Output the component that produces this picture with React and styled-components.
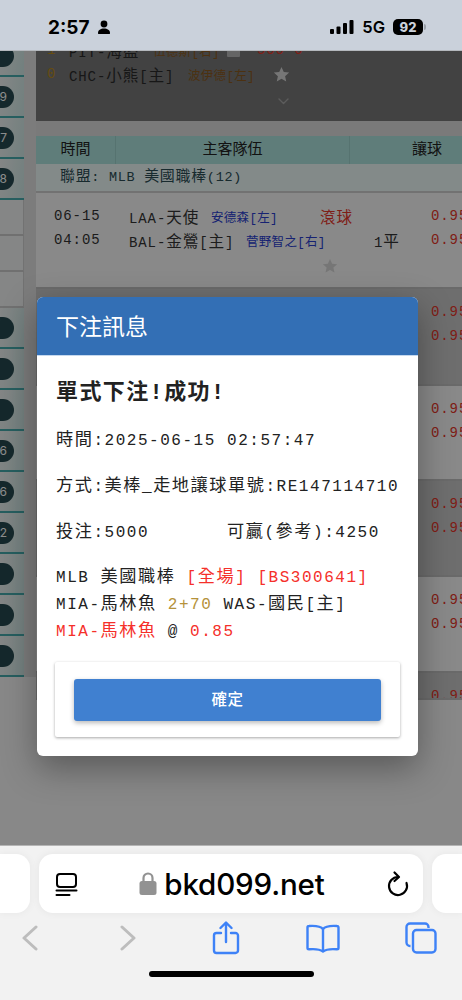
import React from 'react'
import styled, { createGlobalStyle } from 'styled-components'

const MONO = `"Liberation Mono", "Noto Sans CJK TC", monospace`
const SANS = `Inter, "Noto Sans CJK TC", sans-serif`

const GlobalStyle = createGlobalStyle`
  html, body { margin: 0; padding: 0; background: #f2f2f2; }
  * { box-sizing: border-box; }
`

const Screen = styled.div`
  width: 462px;
  height: 1000px;
  display: flex;
  flex-direction: column;
  overflow: hidden;
  font-family: ${MONO};
`

/* status bar */
const StatusBar = styled.div`
  height: 50px;
  flex: none;
  background: #cad1db;
  display: flex;
  align-items: center;
  justify-content: space-between;
  padding: 4px 39px 0 48px;
  color: #000;
  font-family: ${SANS};
  position: relative;
  z-index: 3;
  box-shadow: 0 1px 0 #b4b8bd;
`
const StatusGroup = styled.div`
  display: flex;
  align-items: center;
  gap: ${({ gap }) => gap || 4}px;
`
const Clock = styled.span`
  font-size: 19px;
  font-weight: 700;
`
const Network = styled.span`
  font-size: 16.5px;
  font-weight: 600;
`
const Battery = styled.span`
  width: 30px;
  height: 16px;
  border-radius: 5px;
  background: #000;
  color: #cad1db;
  font-size: 13px;
  font-weight: 800;
  line-height: 16px;
  text-align: center;
  position: relative;
  &::after {
    content: '';
    position: absolute;
    right: -3px;
    top: 5px;
    width: 2px;
    height: 6px;
    border-radius: 0 2px 2px 0;
    background: #9aa0a8;
  }
`

/* page behind the dialog */
const Page = styled.div`
  flex: 1;
  position: relative;
  overflow: hidden;
  display: flex;
  align-items: flex-start;
  background: #f7f7f7;
`
const Sidebar = styled.div`
  width: 36px;
  flex: none;
  margin-top: -14px;
  padding-right: 12px;
  background: #e2e2e2;
  display: flex;
  flex-direction: column;
`
const SideRow = styled.div`
  height: 41px;
  display: flex;
  align-items: center;
  background: linear-gradient(100deg, #f1f4f4 0%, #cfe9e6 100%);
  border-bottom: 2px solid #46acae;
`
const SideBlank = styled.div`
  height: 36px;
  background: #f3f5f5;
  border-right: 1px solid #d0d0d0;
  border-bottom: 2px solid #cccccc;
`
const Pill = styled.span`
  width: 28px;
  height: 22px;
  margin-left: -14px;
  border-radius: 11px;
  background: #274a50;
  color: #fff;
  font: 12px ${SANS};
  line-height: 22px;
  text-align: right;
  padding-right: 7px;
  flex: none;
`
const Main = styled.div`
  flex: 1;
  min-width: 0;
  display: flex;
  flex-direction: column;
  overflow: hidden;
`
const Games = styled.div`
  font-size: 14px;
  display: flex;
  flex-direction: column;
`
const GameCard = styled.div`
  height: ${({ height }) => height}px;
  flex: none;
  padding: 11px 0 0 18px;
  background: ${({ tone }) => (tone === 'dark' ? '#c9c9c9' : '#f9f9f9')};
  border-bottom: 2px solid #c2c2c2;
  overflow: hidden;
`
const TopCard = styled.div`
  height: 83px;
  flex: none;
  margin-top: -12px;
  background: #787878;
  padding-left: 11px;
  font-size: 14px;
`
const Spacer = styled.div`
  height: 15px;
  background: #dedede;
`
const GameRow = styled.div`
  display: grid;
  grid-template-columns: ${({ cols }) => cols};
  height: 24px;
  align-items: center;
  white-space: nowrap;
  letter-spacing: 0.9px;
  color: ${({ dim }) => (dim ? '#2a2a2a' : '#333')};
`
const Pitcher = styled.span`
  color: ${({ color }) => color};
  font-size: 12.5px;
  letter-spacing: 0.3px;
`
const Goal = styled.span`
  color: #b98a1e;
`
const Live = styled.span`
  color: #e8362a;
  font-size: 15.5px;
`
const Odds = styled.span`
  color: #e8362a;
`
const MutedBox = styled.span`
  display: block;
  width: 13px;
  height: 13px;
  border-radius: 1px;
  background: #b8b8b8;
`
const CardFoot = styled.div`
  display: flex;
  justify-content: center;
  width: 32px;
  margin: ${({ top }) => top}px 0 0 ${({ left }) => left}px;
`
const HeaderRow = styled.div`
  height: 28px;
  flex: none;
  display: grid;
  grid-template-columns: 80px 234px 154px;
  background: #aee4de;
  color: #222;
  font: 15px "Noto Sans CJK TC", sans-serif;
  line-height: 24px;
  text-align: center;
`
const HeaderCell = styled.div`
  border-right: 1px solid #9dd2cc;
`
const League = styled.div`
  height: 29px;
  flex: none;
  padding-left: 24px;
  line-height: 27px;
  font-size: 13.5px;
  letter-spacing: 0.7px;
  color: #2c4d55;
  background: #eefbfa;
  border-bottom: 2px solid #d0d0d0;
`
const Scrim = styled.div`
  position: absolute;
  inset: 0;
  background: rgba(0, 0, 0, 0.45);
  padding: 247px 44px 0 37px;
`

/* dialog */
const Dialog = styled.div`
  height: 459px;
  background: #fff;
  border-radius: 6px;
  overflow: hidden;
  box-shadow: 0 12px 34px rgba(0, 0, 0, 0.35);
  display: flex;
  flex-direction: column;
`
const DialogHeader = styled.div`
  height: 59px;
  flex: none;
  padding-left: 19px;
  background: #336fb5;
  border-bottom: 1px solid #c5d8ee;
  color: #fff;
  font: 23px/56px "Noto Sans CJK TC", sans-serif;
`
const DialogBody = styled.div`
  flex: 1;
  padding: 20px 0 0 19px;
  color: #222;
  font-size: 16px;
  letter-spacing: 1.53px;
  white-space: pre;
`
const Title = styled.div`
  height: 36px;
  margin-bottom: 17px;
  font: 700 22px/36px ${MONO};
  letter-spacing: 1.4px;
`
const Line = styled.div`
  height: 46px;
  line-height: 24px;
`
const Summary = styled.div`
  margin-top: -3px;
`
const SummaryLine = styled.div`
  height: 27px;
  line-height: 27px;
`
const Accent = styled.span`
  color: ${({ color }) => color};
`
const ButtonCard = styled.div`
  height: 75px;
  width: 345px;
  margin: 17px 0 0 -1px;
  padding: 17px 18px 0 19px;
  background: #fff;
  border-radius: 2px;
  box-shadow: 0 1px 3px rgba(0, 0, 0, 0.35);
`
const ConfirmButton = styled.button`
  display: block;
  width: 307px;
  height: 42px;
  padding: 0 0 4px;
  border: 0;
  border-radius: 3px;
  background: #4080d0;
  color: #fff;
  font: 500 15.5px "Noto Sans CJK TC", sans-serif;
  letter-spacing: 0.5px;
  box-shadow: 0 2px 5px rgba(0, 0, 0, 0.28);
`
// the original's Chinese glyphs run larger than its Latin ones
const Han = styled.span`
  font-size: ${({ scale }) => scale}em;
`

/* browser chrome */
const Browser = styled.div`
  height: 155px;
  flex: none;
  background: #f2f2f2;
  border-top: 1px solid #b5b5b5;
  display: flex;
  flex-direction: column;
  position: relative;
  z-index: 3;
`
const TabStrip = styled.div`
  height: 59px;
  margin-top: 8px;
  flex: none;
  display: grid;
  grid-template-columns: 30px 384px 30px;
  column-gap: 9px;
`
const TabPeek = styled.div`
  background: #fff;
  border-radius: ${({ side }) => (side === 'left' ? '0 14px 14px 0' : '14px 0 0 14px')};
  box-shadow: 0 0 8px rgba(0, 0, 0, 0.05);
`
const AddressBar = styled.div`
  background: #fff;
  border-radius: 14px;
  box-shadow: 0 0 8px rgba(0, 0, 0, 0.06);
  display: flex;
  align-items: center;
  justify-content: space-between;
  padding: 0 13px 0 15px;
`
const Host = styled.div`
  display: flex;
  align-items: center;
  gap: 7px;
  color: #000;
  font: 500 29.6px ${SANS};
  letter-spacing: -0.2px;
`
const Toolbar = styled.div`
  display: flex;
  align-items: center;
  justify-content: space-between;
  height: 44px;
  margin-top: 3px;
  padding: 0 41px 0 34px;
`
const ToolSlot = styled.div`
  width: 0;
  display: flex;
  justify-content: center;
  margin-left: ${({ shift }) => shift || 0}px;
  & > svg {
    flex: none;
  }
`
const HomeBar = styled.div`
  width: 165px;
  height: 6px;
  margin: 11px 0 0 149px;
  border-radius: 3px;
  background: #000;
`

const PersonIcon = () => (
  <svg width='14' height='15' viewBox='0 0 14 15' fill='#000'>
    <circle cx='7' cy='4' r='3.4' />
    <path d='M1 13.2c0-3 2.6-4.6 6-4.6s6 1.6 6 4.6c0 .6-.4.9-1 .9H2c-.6 0-1-.3-1-.9z' />
  </svg>
)
const SignalIcon = () => (
  <svg width='24' height='16' viewBox='0 0 24 16' fill='#000'>
    <rect x='0' y='10' width='4' height='5' rx='1' />
    <rect x='6.5' y='7.5' width='4' height='7.5' rx='1' />
    <rect x='13' y='4' width='4' height='11' rx='1' />
    <rect x='19.5' y='1' width='4' height='14' rx='1' />
  </svg>
)
const Star = ({ size = 16 }) => (
  <svg width={size} height={size} viewBox='0 0 24 24' fill='#d8d8d8'>
    <path d='M12 1.500l3.200 7 7.600.8-5.700 5.100 1.600 7.500L12 18.100l-6.700 3.800 1.600-7.500L1.200 9.300l7.600-.8z' />
  </svg>
)
const CaretIcon = () => (
  <svg width='11' height='7' viewBox='0 0 11 7' fill='none' stroke='#a8a8a8' strokeWidth='1.400' strokeLinecap='round' strokeLinejoin='round'>
    <path d='M1 1l4.500 4.500L10 1' />
  </svg>
)
const PageMenuIcon = () => (
  <svg width='24' height='28' viewBox='0 0 24 28' fill='none' stroke='#000' strokeWidth='2' strokeLinecap='round'>
    <rect x='3' y='4' width='19' height='13' rx='3' />
    <path d='M2.500 20.500h20M2.500 25h13' />
  </svg>
)
const LockIcon = () => (
  <svg width='18' height='25' viewBox='0 0 18 25' fill='#929292'>
    <path d='M4.500 11V7a4.500 4.500 0 0 1 9 0v4' fill='none' stroke='#929292' strokeWidth='2.200' />
    <rect x='0.500' y='10' width='17' height='14' rx='2.500' />
  </svg>
)
const ReloadIcon = () => (
  <svg width='24' height='28' viewBox='0 0 24 28' fill='none' stroke='#000' strokeWidth='2.200' strokeLinecap='round' strokeLinejoin='round'>
    <path d='M12 7A9 9 0 1 0 20.500 13' />
    <path d='M8.500 2.500L13 7l-4.500 4' />
  </svg>
)
const ChevronIcon = ({ flip }) => (
  <svg width='16' height='26' viewBox='0 0 16 26' fill='none' stroke='#bdbdbd' strokeWidth='3' strokeLinecap='round' strokeLinejoin='round'>
    <path d={flip ? 'M2 2l12 11L2 24' : 'M14 2L2 13l12 11'} />
  </svg>
)
const ShareIcon = () => (
  <svg width='28' height='34' viewBox='0 0 28 34' fill='none' stroke='#3e82f7' strokeWidth='2.400' strokeLinecap='round' strokeLinejoin='round'>
    <path d='M9 12H4.500a2.500 2.500 0 0 0-2.500 2.500v15A2.500 2.500 0 0 0 4.500 32h19a2.500 2.500 0 0 0 2.500-2.500v-15a2.500 2.500 0 0 0-2.500-2.500H19' />
    <path d='M14 21V2M8.500 7L14 1.500 19.500 7' />
  </svg>
)
const BookIcon = () => (
  <svg width='34' height='30' viewBox='0 0 34 30' fill='none' stroke='#3e82f7' strokeWidth='2.400' strokeLinejoin='round'>
    <path d='M17 6c-2-2.500-6-3.500-14-3-.8 0-1.500.7-1.500 1.500V25c0 .8.7 1.300 1.500 1.300 6-.5 11 0 14 2.200 3-2.200 8-2.700 14-2.200.8 0 1.500-.5 1.500-1.300V4.500c0-.8-.7-1.500-1.500-1.500-8-.5-12 .5-14 3z' />
    <path d='M17 6v22' />
  </svg>
)
const TabsIcon = () => (
  <svg width='32' height='32' viewBox='0 0 32 32' fill='none' stroke='#3e82f7' strokeWidth='2.400'>
    <path d='M5.500 24H5a3.500 3.500 0 0 1-3.500-3.500V5A3.500 3.500 0 0 1 5 1.500h15A3.500 3.500 0 0 1 23.500 5v1' />
    <rect x='8' y='8' width='22.500' height='22.500' rx='3.500' />
  </svg>
)

// splits a string so that its Chinese runs get the larger size
const Mixed = ({ text, scale = 1.075 }) =>
  text.split(/([^\x00-\x7f]+)/).map((part, i) =>
    i % 2 ? (
      <Han key={i} scale={scale}>
        {part}
      </Han>
    ) : (
      part
    )
  )

const sidebarTop = ['', '9', '7', '8']
const sidebarBottom = ['', '', '', '6', '6', '2', '', '', '']

const oddsCards = [
  { tone: 'dark', height: 97 },
  { tone: 'light', height: 95 },
  { tone: 'dark', height: 96 },
  { tone: 'light', height: 96 }
]

const ODDS_COLS = '377px auto'

const OddsRow = () => (
  <GameRow cols={ODDS_COLS}>
    <span />
    <Odds>0.95</Odds>
  </GameRow>
)

const App = () => (
  <Screen>
    <GlobalStyle />
    <StatusBar>
      <StatusGroup gap={7}>
        <Clock>2:57</Clock>
        <PersonIcon />
      </StatusGroup>
      <StatusGroup gap={8}>
        <SignalIcon />
        <Network>5G</Network>
        <Battery>92</Battery>
      </StatusGroup>
    </StatusBar>

    <Page>
      <Sidebar>
        {sidebarTop.map((n, i) => (
          <SideRow key={i}>
            <Pill>{n}</Pill>
          </SideRow>
        ))}
        <SideBlank />
        <SideBlank />
        <SideBlank />
        {sidebarBottom.map((n, i) => (
          <SideRow key={i}>
            <Pill>{n}</Pill>
          </SideRow>
        ))}
      </Sidebar>

      <Main>
        <TopCard>
          <GameRow dim cols='22px 84px 74px 30px auto'>
            <Goal>1</Goal>
            <span>
              <Mixed text='PIT-海盜' scale={1.114} />
            </span>
            <Pitcher color='#8a5a1f'>伍德斯[右]</Pitcher>
            <MutedBox />
            <Odds>500 0</Odds>
          </GameRow>
          <GameRow dim cols='22px 119px 85px auto'>
            <Goal>0</Goal>
            <span>
              <Mixed text='CHC-小熊[主]' scale={1.114} />
            </span>
            <Pitcher color='#8a5a1f'>波伊德[左]</Pitcher>
            <Star size={17} />
          </GameRow>
          <CardFoot left={220} top={12}>
            <CaretIcon />
          </CardFoot>
        </TopCard>
        <Spacer />
        <HeaderRow>
          <HeaderCell>時間</HeaderCell>
          <HeaderCell>主客隊伍</HeaderCell>
          <div>讓球</div>
        </HeaderRow>
        <League>
          <Mixed text='聯盟: MLB 美國職棒(12)' scale={1.11} />
        </League>
        <Games>
          <GameCard tone='light' height={96}>
            <GameRow cols='75px 82px 109px 111px auto'>
              <span>06-15</span>
              <span>
                <Mixed text='LAA-天使' scale={1.114} />
              </span>
              <Pitcher color='#2a3fd0'>安德森[左]</Pitcher>
              <Live>滾球</Live>
              <Odds>0.95</Odds>
            </GameRow>
            <GameRow cols='75px 117px 128px 57px auto'>
              <span>04:05</span>
              <span>
                <Mixed text='BAL-金鶯[主]' scale={1.114} />
              </span>
              <Pitcher color='#2a3fd0'>菅野智之[右]</Pitcher>
              <span>
                <Mixed text='1平' scale={1.114} />
              </span>
              <Odds>0.95</Odds>
            </GameRow>
            <CardFoot left={260} top={6}>
              <Star size={16} />
            </CardFoot>
          </GameCard>
          {oddsCards.map((card, i) => (
            <GameCard key={i} tone={card.tone} height={card.height}>
              <OddsRow />
              <OddsRow />
            </GameCard>
          ))}
          <GameCard tone='dark' height={27}>
            <OddsRow />
          </GameCard>
        </Games>
      </Main>

      <Scrim>
        <Dialog>
          <DialogHeader>下注訊息</DialogHeader>
          <DialogBody>
            <Title>單式下注!成功!</Title>
            <Line>
              <Mixed text='時間:2025-06-15 02:57:47' />
            </Line>
            <Line>
              <Mixed text='方式:美棒_走地讓球單號:RE147114710' />
            </Line>
            <Line>
              <Mixed text='投注:5000       可贏(參考):4250' />
            </Line>
            <Summary>
              <SummaryLine>
                <Mixed text='MLB 美國職棒 ' />
                <Accent color='#f5302a'>
                  <Mixed text='[全場] [BS300641]' />
                </Accent>
              </SummaryLine>
              <SummaryLine>
                <Mixed text='MIA-馬林魚 ' />
                <Accent color='#b5923a'>2+70</Accent>
                <Mixed text=' WAS-國民[主]' />
              </SummaryLine>
              <SummaryLine>
                <Accent color='#f5302a'>
                  <Mixed text='MIA-馬林魚' />
                </Accent>
                {' @ '}
                <Accent color='#f5302a'>0.85</Accent>
              </SummaryLine>
            </Summary>
            <ButtonCard>
              <ConfirmButton>確定</ConfirmButton>
            </ButtonCard>
          </DialogBody>
        </Dialog>
      </Scrim>
    </Page>

    <Browser>
      <TabStrip>
        <TabPeek side='left' />
        <AddressBar>
          <PageMenuIcon />
          <Host>
            <LockIcon />
            bkd099.net
          </Host>
          <ReloadIcon />
        </AddressBar>
        <TabPeek side='right' />
      </TabStrip>
      <Toolbar>
        <ToolSlot shift={-4}>
          <ChevronIcon />
        </ToolSlot>
        <ToolSlot>
          <ChevronIcon flip />
        </ToolSlot>
        <ToolSlot>
          <ShareIcon />
        </ToolSlot>
        <ToolSlot>
          <BookIcon />
        </ToolSlot>
        <ToolSlot>
          <TabsIcon />
        </ToolSlot>
      </Toolbar>
      <HomeBar />
    </Browser>
  </Screen>
)

export default App
